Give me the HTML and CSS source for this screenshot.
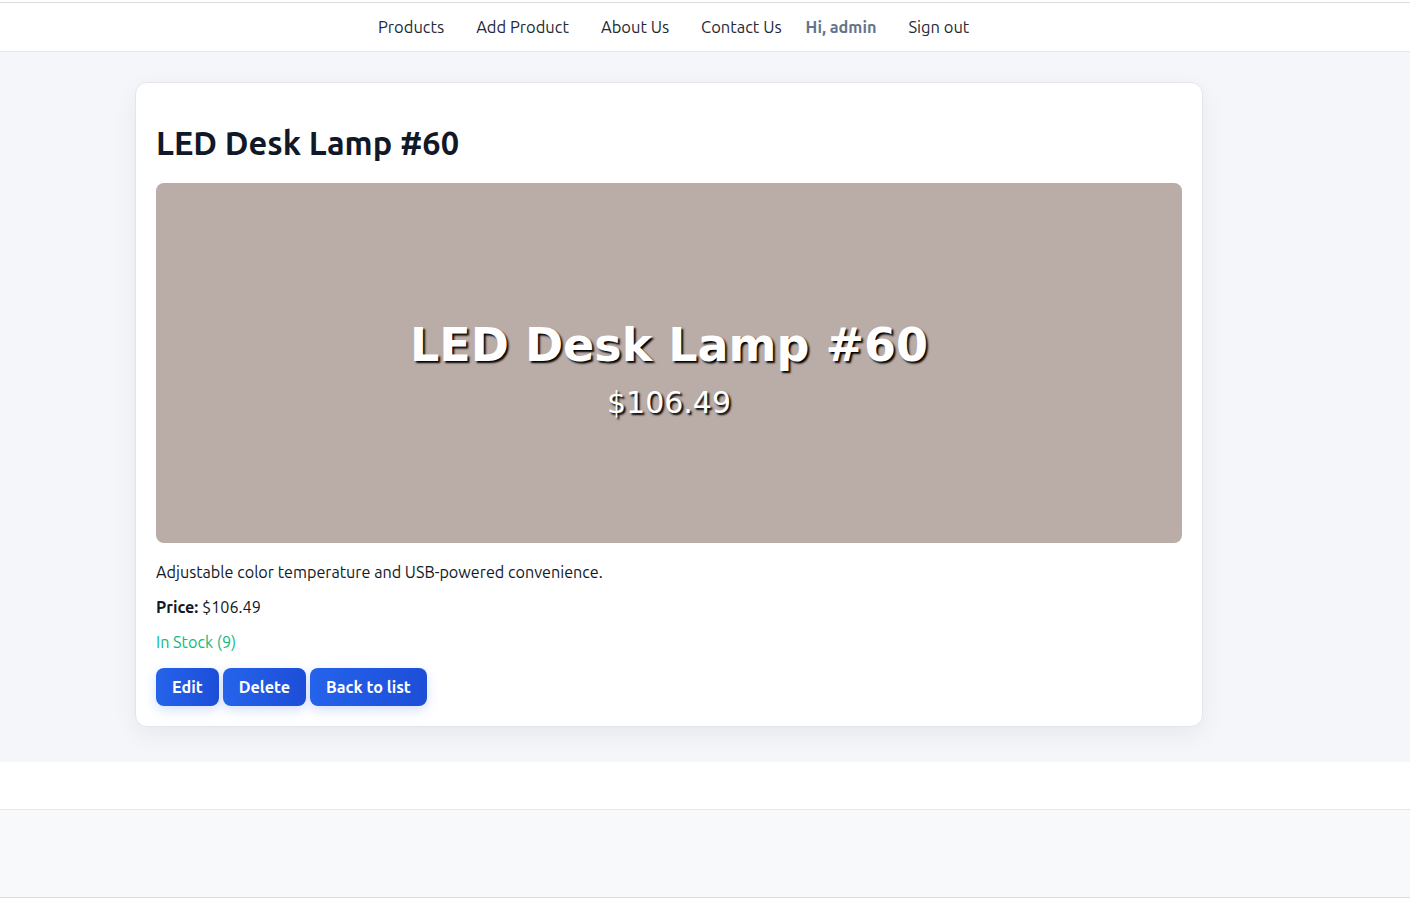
FILE: index.html
```html
<!DOCTYPE html>
<html lang="en">
<head>
<meta charset="utf-8">
<title>LED Desk Lamp #60</title>
<link rel="stylesheet" href="styles.css">
</head>
<body>
<div class="topline"></div>
<header class="navbar">
  <nav class="nav">
    <a class="nav-link" href="#">Products</a>
    <a class="nav-link" href="#">Add Product</a>
    <a class="nav-link" href="#">About Us</a>
    <a class="nav-link" href="#">Contact Us</a>
    <span class="nav-user">Hi, admin</span>
    <a class="nav-link" href="#">Sign out</a>
  </nav>
</header>
<main class="main">
  <div class="container">
    <section class="card">
      <h1 class="title">LED Desk Lamp #60</h1>
      <div class="hero">
        <div class="hero-name">LED Desk Lamp #60</div>
        <div class="hero-price">$106.49</div>
      </div>
      <p class="desc">Adjustable color temperature and USB-powered convenience.</p>
      <p class="price"><strong>Price:</strong> $106.49</p>
      <p class="stock">In Stock (9)</p>
      <div class="actions">
        <a class="btn" href="#">Edit</a>
        <a class="btn" href="#">Delete</a>
        <a class="btn" href="#">Back to list</a>
      </div>
    </section>
  </div>
</main>
<footer class="footer"></footer>
<div class="bottom"></div>
</body>
</html>
```
FILE: styles.css
```css
* { box-sizing: border-box; }
html, body { margin: 0; padding: 0; }
body {
  font-family: "Ubuntu", "Noto Sans", "Open Sans", sans-serif;
  color: #111827;
  background: #fff;
  font-size: 16.2px;
}
.topline { height: 3px; background: #fff; border-bottom: 1px solid #dcdcdc; }
.navbar {
  background: #fff;
  border-bottom: 1px solid #e5e7eb;
  height: 49px;
  display: flex;
  align-items: center;
}
.nav {
  display: flex;
  align-items: center;
  margin-left: calc(50% - 343px);
}
.nav-link {
  color: #1f2937;
  text-decoration: none;
  padding: 0 16px;
  font-size: 16.5px;
}
.nav-user {
  color: #64748b;
  font-weight: 700;
  font-size: 16.3px;
  padding: 0 16px 0 8px;
}
.main {
  background: #f5f6fa;
  padding: 30px 0 35px;
}
.container {
  width: 1068px;
  margin-left: calc(50% - 570px);
}
.card {
  background: #fff;
  border: 1px solid #e3e5ea;
  border-radius: 12px;
  box-shadow: 0 8px 24px rgba(15, 23, 42, 0.06);
  padding: 20px;
}
.title {
  font-size: 32.6px;
  font-weight: 700;
  margin: 20px 0 20px;
  line-height: 40px;
  color: #111827;
}
.hero {
  height: 360px;
  background: #baaca7;
  border-radius: 8px;
  display: flex;
  flex-direction: column;
  align-items: center;
  justify-content: center;
  padding-top: 14px;
  color: #fff;
  font-family: "DejaVu Sans", sans-serif;
  text-shadow: 2px 2px 2px #000;
}
.hero-name { font-size: 46px; font-weight: 700; line-height: 56px; }
.hero-price { font-size: 30px; line-height: 40px; margin-top: 10px; }
.desc, .price, .stock { margin: 0; line-height: 24px; }
.desc { margin-top: 17px; }
.price { margin-top: 11px; }
.stock { margin-top: 11px; color: #10b981; }
.actions { margin-top: 14px; display: flex; gap: 4px; }
.btn {
  display: inline-block;
  background: linear-gradient(90deg, #2563eb, #1d4ed8);
  color: #fff;
  font-weight: 700;
  font-size: 16.2px;
  text-decoration: none;
  height: 38px;
  line-height: 38px;
  padding: 0 16px;
  border-radius: 8px;
  box-shadow: 0 4px 12px rgba(37, 99, 235, 0.2);
}
.footer {
  height: 48px;
  background: #fff;
  border-bottom: 1px solid #e5e7eb;
}
.bottom {
  height: 88px;
  background: #f8f9fb;
  border-bottom: 1px solid #dcdcdc;
}
```
